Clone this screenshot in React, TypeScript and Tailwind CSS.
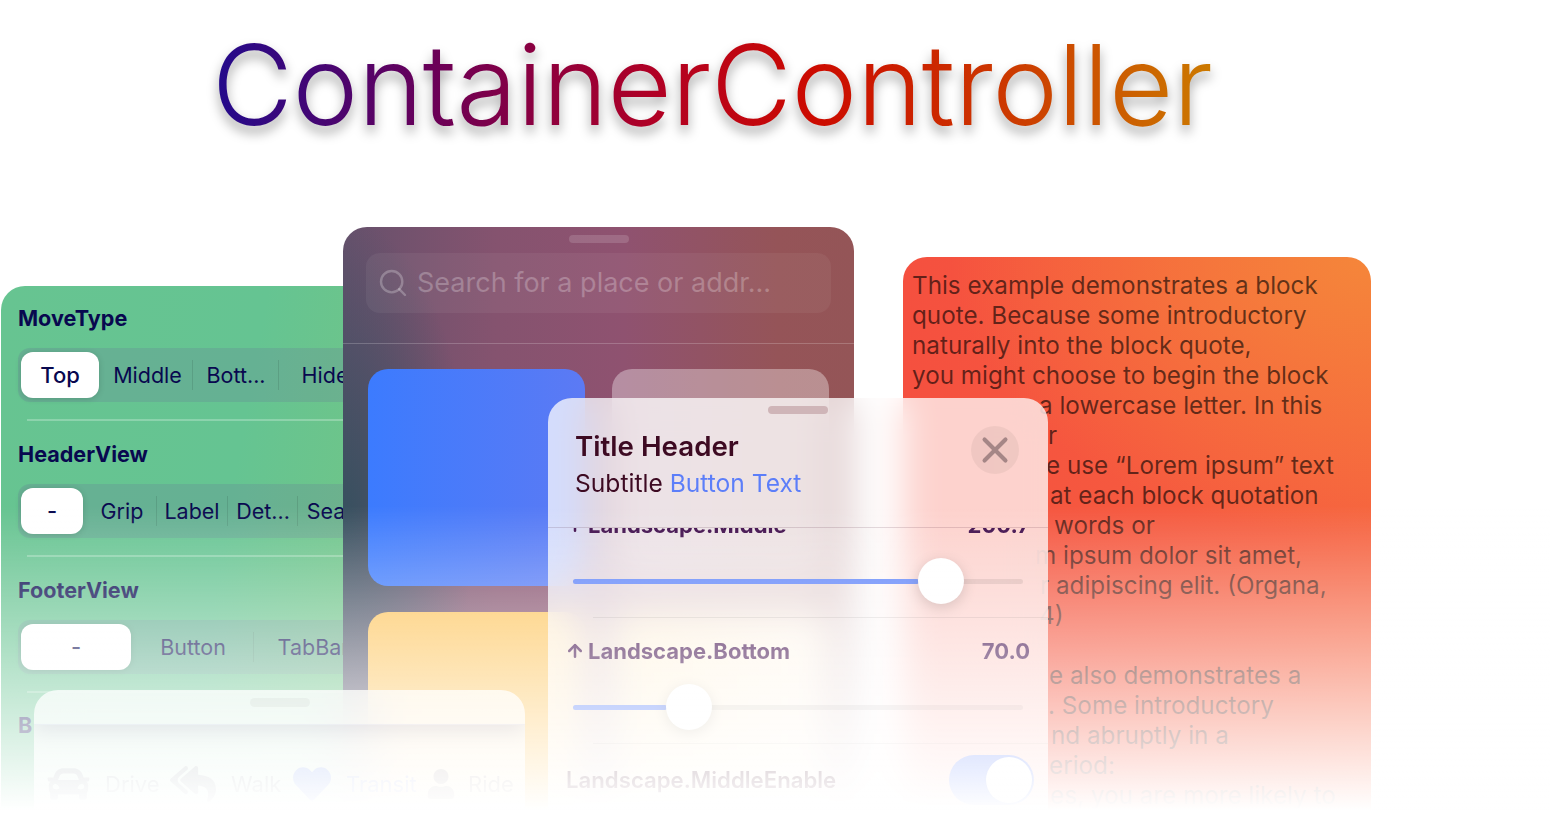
import React from "react";
import { Search, X, ArrowUp } from "lucide-react";
import { FaCar, FaReplyAll, FaHeart, FaUser } from "react-icons/fa";

type Cell = { label: string; cls: string; last?: boolean };

function Section({ title, selected, selCls, cells }: { title: string; selected: string; selCls: string; cells: Cell[] }) {
  return (
    <div className="flex flex-col">
      <div className="h-9 pt-0.5 flex items-center text-[21.6px] font-bold leading-none text-[#08084f]">{title}</div>
      <div className="mt-3 h-[54px] flex items-center bg-[#6a6a9a]/20 rounded-xl px-[3px] w-[440px]">
        <div className={`${selCls} h-[46px] shrink-0 bg-white rounded-xl flex items-center justify-center text-[22px] font-medium shadow-[0_1px_6px_rgba(0,0,0,0.15)]`}>{selected}</div>
        {cells.map((c) => (
          <div key={c.label} className={`${c.cls} shrink-0 h-[30px] flex items-center justify-center text-[21.5px] whitespace-nowrap ${c.last ? "" : "border-r border-black/10"}`}>
            {c.label}
          </div>
        ))}
      </div>
      <div className="ml-[9px] mt-[17px] h-0.5 bg-white/25" />
      <div className="h-[15px]" />
    </div>
  );
}

function GreenWindow() {
  return (
    <div className="absolute left-px top-[286px] w-[440px] h-[530px] rounded-tl-[24px] pl-[17px] pt-[14px] text-[#08084f] overflow-hidden bg-[linear-gradient(100deg,#67c491,#65c492_50%,#78c580)]">
      <Section
        title="MoveType"
        selected="Top"
        selCls="w-[78px]"
        cells={[
          { label: "Middle", cls: "w-[94px] pl-1" },
          { label: "Bott...", cls: "w-[86px] pl-px" },
          { label: "Hide", cls: "w-[90px] pl-[2px]", last: true },
        ]}
      />
      <Section
        title="HeaderView"
        selected="-"
        selCls="w-[62px]"
        cells={[
          { label: "Grip", cls: "w-[74px] pl-[5px]" },
          { label: "Label", cls: "w-[71px]" },
          { label: "Det...", cls: "w-[70px] pl-px" },
          { label: "Search", cls: "w-[88px] pl-px", last: true },
        ]}
      />
      <Section
        title="FooterView"
        selected="-"
        selCls="w-[110px]"
        cells={[
          { label: "Button", cls: "w-[123px] pl-[2px]" },
          { label: "TabBar", cls: "w-[123px] pr-1", last: true },
        ]}
      />
      <div className="h-9 flex items-center text-[21.6px] font-bold leading-none">B</div>
    </div>
  );
}

function DarkWindow() {
  return (
    <div className="absolute left-[343px] top-[227px] w-[511px] h-[605px] rounded-t-[24px] overflow-hidden bg-[radial-gradient(ellipse_130px_300px_at_0%_48%,#37505f_0%,#3a506280_55%,transparent_100%),linear-gradient(90deg,#66516c_0%,#85536f_30%,#8f5270_55%,#955458_85%,#945557_100%)]">
      <div className="flex justify-center pt-2">
        <div className="w-[60px] h-2 rounded-full bg-white/15" />
      </div>
      <div className="mx-[23px] mt-2.5 h-[60px] rounded-[14px] bg-white/5 flex items-center pl-[11px] gap-2 text-[27px] text-white/25">
        <Search size={32} strokeWidth={1.8} className="shrink-0" />
        <span className="whitespace-nowrap">Search for a place or addr...</span>
      </div>
      <div className="mt-[30px] h-px bg-white/20" />
      <div className="mt-[25px] ml-[25px] grid grid-cols-[217px_217px] gap-x-[27px] gap-y-[26px]">
        <div className="h-[217px] rounded-[20px] bg-[linear-gradient(90deg,#3c7bfe,#5c7af4)]" />
        <div className="h-[217px] rounded-[20px] bg-white/35" />
        <div className="h-[217px] rounded-[20px] bg-[#fdc55c]" />
        <div className="h-[217px] rounded-[20px] bg-[linear-gradient(90deg,#fdd27c,#fde6c8)]" />
      </div>
    </div>
  );
}

const redLines: { t: string; cls: string }[] = [
  { t: "This example demonstrates a block", cls: "" },
  { t: "quote. Because some introductory", cls: "" },
  { t: "naturally into the block quote,", cls: "" },
  { t: "you might choose to begin the block", cls: "" },
  { t: "a lowercase letter. In this", cls: "pl-[127px]" },
  { t: "r", cls: "pl-[136px]" },
  { t: "e use “Lorem ipsum” text", cls: "pl-[134px]" },
  { t: "at each block quotation", cls: "pl-[138px]" },
  { t: "words or", cls: "pl-[142px]" },
  { t: "m ipsum dolor sit amet,", cls: "pl-[123px]" },
  { t: "r adipiscing elit. (Organa,", cls: "pl-[128px]" },
  { t: "4)", cls: "pl-[127px]" },
  { t: "\u00a0", cls: "" },
  { t: "e also demonstrates a", cls: "pl-[137px]" },
  { t: ". Some introductory", cls: "pl-[136px]" },
  { t: "nd abruptly in a", cls: "pl-[139px]" },
  { t: "eriod:", cls: "pl-[137px]" },
  { t: "es, you are more likely to", cls: "pl-[138px]" },
];

function RedWindow() {
  return (
    <div className="absolute left-[903px] top-[257px] w-[468px] h-[560px] rounded-t-[24px] overflow-hidden pl-[9px] pt-[14px] text-[24.25px] leading-[30px] text-black/60 bg-[radial-gradient(ellipse_420px_280px_at_100%_0%,#f5863a,#f5863a00),linear-gradient(90deg,#f5503f,#f6623f)]">
      {redLines.map((l, i) => (
        <div key={i} className={`whitespace-nowrap ${l.cls}`}>{l.t}</div>
      ))}
    </div>
  );
}

function TitlePanel() {
  return (
    <div className="absolute left-[548px] top-[398px] w-[500px] h-[420px] rounded-t-[24px] overflow-hidden bg-white/[0.74] backdrop-blur-[18px] text-[#3d0a22] flex flex-col">
      <div className="h-[130px] shrink-0 relative border-b border-[#3d0a22]/15">
        <div className="flex justify-center pt-2">
          <div className="w-[60px] h-2 rounded-full bg-[#cfb5b8]" />
        </div>
        <div className="pl-[27px] pt-[15px] text-[27.7px] leading-[34px] font-semibold">Title Header</div>
        <div className="pl-[27px] pt-[5px] text-[24.6px] leading-[30px]">
          Subtitle <span className="text-[#5c7ef9]">Button Text</span>
        </div>
        <div className="absolute right-[29px] top-[28px] w-12 h-12 rounded-full bg-black/5 flex items-center justify-center text-[#a58686]">
          <X size={42} strokeWidth={2.3} />
        </div>
      </div>
      <div className="flex-1 overflow-hidden">
        <div className="-mt-[17px] pl-[18px] pr-[18px] flex flex-col">
          <Row label="Landscape.Middle" value="200.7" />
          <Slider fillCls="w-[346px] bg-[#5f84fa]" thumbCls="left-[345px]" />
          <div className="ml-[27px] -mr-[18px] mt-[13px] h-px bg-black/10" />
          <div className="mt-[19px]">
            <Row label="Landscape.Bottom" value="70.0" />
          </div>
          <Slider fillCls="w-[94px] bg-[#5f84fa]" thumbCls="left-[93px]" />
          <div className="ml-[27px] -mr-[18px] mt-[13px] h-px bg-black/10" />
          <div className="mt-[11px] flex items-center justify-between">
            <span className="text-[22.2px] font-semibold leading-[50px]">Landscape.MiddleEnable</span>
            <div className="w-[85px] h-[50px] rounded-full bg-[#5c7ef9] p-[2px] flex justify-end -mr-[4px]">
              <div className="w-[46px] h-[46px] rounded-full bg-white shadow" />
            </div>
          </div>
        </div>
      </div>
    </div>
  );
}

function Row({ label, value }: { label: string; value: string }) {
  return (
    <div className="flex items-center justify-between h-7 text-[22px] font-bold leading-none text-[#3d0a4a]">
      <span className="flex items-center gap-[3px] -ml-px">
        <ArrowUp size={20} strokeWidth={3} />
        {label}
      </span>
      <span>{value}</span>
    </div>
  );
}

function Slider({ fillCls, thumbCls }: { fillCls: string; thumbCls: string }) {
  return (
    <div className="relative mt-[19px] ml-[7px] mr-[7px] h-[46px] flex items-center">
      <div className="w-full h-[5px] rounded-full bg-black/10">
        <div className={`${fillCls} h-full rounded-full`} />
      </div>
      <div className={`absolute ${thumbCls} top-0 w-[46px] h-[46px] rounded-full bg-white shadow-[0_4px_14px_rgba(0,0,0,0.2)]`} />
    </div>
  );
}

function BottomPanel() {
  return (
    <div className="absolute left-[34px] top-[690px] w-[491px] h-[130px] rounded-t-[24px] overflow-hidden bg-white/75 backdrop-blur-xl">
      <div className="h-[35px] border-b border-[#8080c0]/30 flex justify-center pt-2 shadow-[0_8px_20px_rgba(40,30,80,0.3)]">
        <div className="w-[60px] h-[9px] rounded-full bg-black/10" />
      </div>
      <div className="flex items-center pl-[13px] pt-[38px] text-[22px] text-[#3a3a55]/40">
        <FaCar size={42} className="w-[43px]" />
        <span className="ml-[15px] w-[65px]">Drive</span>
        <FaReplyAll size={42} className="w-[46px]" />
        <span className="ml-[15px] w-[62px]">Walk</span>
        <FaHeart size={38} className="w-[38px] text-[#3b64f0]/60" />
        <span className="ml-[15px] w-[80px] text-[#3b64f0]/40">Transit</span>
        <FaUser size={30} className="w-[30px]" />
        <span className="ml-[12px]">Ride</span>
      </div>
    </div>
  );
}

export default function App() {
  return (
    <div className="relative w-[1550px] h-[832px] overflow-hidden bg-white font-[Inter,sans-serif]">
      <div className="absolute left-[212px] top-[14px]">
        <h1 className="text-[111px] leading-[142px] font-light tracking-[-0.35px] whitespace-nowrap text-transparent bg-clip-text bg-[linear-gradient(90deg,#220a8c_0%,#6a0058_22%,#b00025_44%,#cc0a00_60%,#cc3a00_80%,#cc7a00_100%)] blur-[0.5px] drop-shadow-[0_7px_6px_rgba(0,0,0,0.35)]">
          ContainerController
        </h1>
      </div>
      <GreenWindow />
      <RedWindow />
      <DarkWindow />
      <TitlePanel />
      <BottomPanel />
      <div className="absolute left-0 right-0 top-[505px] h-[305px] bg-gradient-to-b from-white/0 to-white pointer-events-none" />
      <div className="absolute left-0 right-0 top-[810px] bottom-0 bg-white" />
    </div>
  );
}
